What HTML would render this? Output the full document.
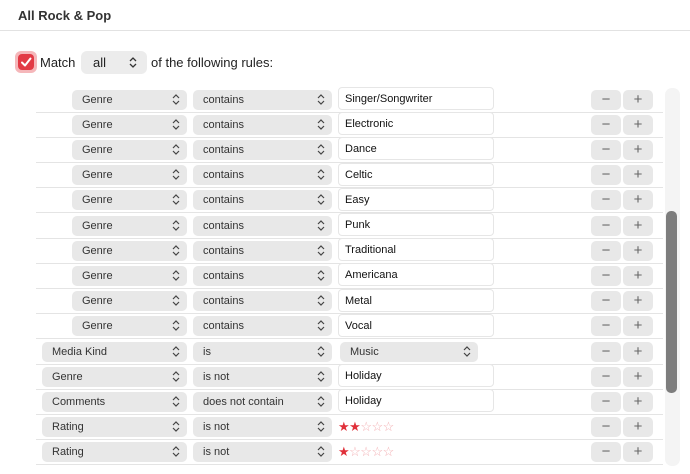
<!DOCTYPE html>
<html><head><meta charset="utf-8"><style>
*{box-sizing:border-box;margin:0;padding:0}
body{width:690px;height:474px;background:#fff;font-family:"Liberation Sans",sans-serif;font-size:11px;color:#222;position:relative;overflow:hidden}
.a{position:absolute}
.pop{position:absolute;height:20px;background:#e8e8e8;border-radius:5px;padding-left:10px;line-height:21px;color:#333}
.chev{position:absolute;right:7px;top:4px}
.tf{position:absolute;height:23px;border:1px solid #e6e6e6;border-radius:4px;background:#fff;padding-left:6px;line-height:23px;color:#111}
.btn{position:absolute;width:30px;height:20px;background:#e8e8e8;border-radius:5px;text-align:center;line-height:20px;color:#666;font-size:15px}
.sep{position:absolute;left:36px;width:627px;height:1px;background:#e4e4e4}
.star{position:absolute;left:338px;color:#e0303a;font-size:13px;letter-spacing:-0.5px}
.star span{color:#f3b0b4}
</style></head><body>
<div class="a" style="left:18px;top:8px;font-weight:bold;font-size:13px;color:#333">All Rock &amp; Pop</div>
<div class="a" style="left:0;top:30px;width:690px;height:1px;background:#e2e2e2"></div>
<div class="a" style="left:15px;top:51px;width:22px;height:22px;border-radius:6px;background:#f5b7ba"></div>
<div class="a" style="left:18px;top:54px;width:16px;height:16px;border-radius:4px;background:#e23a45"></div>
<svg class="a" style="left:18px;top:54px" width="16" height="16"><path d="M4 8.5 L7 11.5 L12.5 4.5" stroke="#fff" stroke-width="2" fill="none" stroke-linecap="round" stroke-linejoin="round"/></svg>
<div class="a" style="left:40px;top:55px;font-size:13px;color:#222">Match</div>
<div class="a" style="left:81px;top:51px;width:66px;height:23px;background:#ececec;border-radius:6px;padding-left:12px;line-height:24px;font-size:13px">all
<svg class="a" style="left:48px;top:6px" width="8" height="11"><path d="M1 4 L4 1 L7 4 M1 7 L4 10 L7 7" stroke="#333" stroke-width="1.3" fill="none"/></svg></div>
<div class="a" style="left:151px;top:55px;font-size:13px;color:#222">of the following rules:</div>

<div class="a" style="left:665px;top:88px;width:15px;height:378px;background:#f4f4f4;border-radius:7px"></div>
<div class="a" style="left:666px;top:211px;width:11px;height:182px;background:#7d7d7d;border-radius:5px"></div>

<div id="rows"></div>
<script>
var rows=[
["Genre","contains","Singer/Songwriter",1],["Genre","contains","Electronic",1],["Genre","contains","Dance",1],["Genre","contains","Celtic",1],["Genre","contains","Easy",1],["Genre","contains","Punk",1],["Genre","contains","Traditional",1],["Genre","contains","Americana",1],["Genre","contains","Metal",1],["Genre","contains","Vocal",1],
["Media Kind","is","Music",0,"pop"],["Genre","is not","Holiday",0],["Comments","does not contain","Holiday",0],["Rating","is not","",0,"s2"],["Rating","is not","",0,"s1"]];
var ch='<svg class="chev" width="8" height="11"><path d="M1 4 L4 1 L7 4 M1 7 L4 10 L7 7" stroke="#444" stroke-width="1.2" fill="none"/></svg>';
var h='';
rows.forEach(function(r,i){
 var c=99+i*25.2, t=c-9.5;
 var l=r[3]?72:42;
 h+='<div class="pop" style="left:'+l+'px;top:'+t+'px;width:'+(187-l)+'px">'+r[0]+ch+'</div>';
 h+='<div class="pop" style="left:193px;top:'+t+'px;width:139px">'+r[1]+ch+'</div>';
 if(r[4]=="pop") h+='<div class="pop" style="left:340px;top:'+t+'px;width:138px">'+r[2]+ch+'</div>';
 else if(r[4]=="s2") h+='<div class="star" style="top:'+(c-8)+'px">★★<span>☆☆☆</span></div>';
 else if(r[4]=="s1") h+='<div class="star" style="top:'+(c-8)+'px">★<span>☆☆☆☆</span></div>';
 else h+='<div class="tf" style="left:338px;top:'+(c-12)+'px;width:156px">'+r[2]+'</div>';
 h+='<div class="btn" style="left:591px;top:'+t+'px">−</div><div class="btn" style="left:623px;top:'+t+'px">+</div>';
 h+='<div class="sep" style="top:'+Math.round(c+12.5)+'px"></div>';
});
document.getElementById('rows').innerHTML=h;
</script>
</body></html>
